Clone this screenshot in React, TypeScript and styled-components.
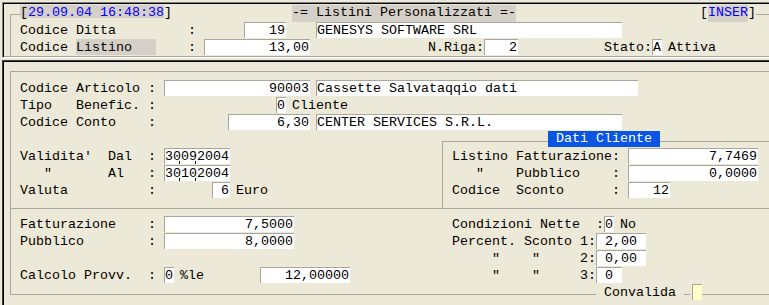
import React from 'react';
import styled, { createGlobalStyle } from 'styled-components';

const FACE = '#ece9d8';
const SHADE = '#d4d0c8';
const LINE = '#a9a79c';
const CHAR = 8;

const GlobalStyle = createGlobalStyle`
  * {
    box-sizing: border-box;
  }

  html,
  body {
    margin: 0;
    padding: 0;
    background: ${FACE};
  }

  body {
    font-family: 'Liberation Mono', 'Courier New', monospace;
    font-size: 13.333px;
    color: #000;
  }
`;

const ScreenTag = styled.div`
  width: 769px;
  height: 305px;
  overflow: hidden;
  background: ${FACE};
`;

const TopPanelTag = styled.div`
  margin: 2px 0 0 2px;
  padding: 2px 0 1px 1px;
  border-top: 1px solid #808080;
  border-left: 1px solid #808080;
  border-bottom: 1px solid #fff;
  box-shadow: inset 1px 1px 0 #000, inset 0 -1px 0 ${LINE};
`;

const BottomPanelTag = styled.div`
  margin: 2px 0 0 2px;
  padding: 1px 0 0 1px;
  height: 245px;
  border-top: 1px solid #404040;
  border-left: 1px solid #404040;
  box-shadow: inset 1px 1px 0 #000;
`;

// --- group box pieces ---

const LegendRowTag = styled.div`
  display: flex;
  height: 17px;
`;

const CornerTag = styled.div<{ $ml?: number; $w: number; $h: number }>`
  flex: none;
  align-self: flex-end;
  margin-left: ${({ $ml }) => $ml ?? 0}px;
  width: ${({ $w }) => $w}px;
  height: ${({ $h }) => $h}px;
  border-top: 1px solid ${LINE};
  border-left: 1px solid ${LINE};
`;

const StubTag = styled.div<{ $h: number }>`
  flex: 1;
  align-self: flex-end;
  height: ${({ $h }) => $h}px;
  border-top: 1px solid ${LINE};
`;

const GroupBodyTag = styled.div`
  margin-left: 6px;
  padding-left: 9px;
  border-left: 1px solid ${LINE};
`;

const FrameTag = styled.div`
  margin: 9px 0 0 6px;
  border-top: 1px solid ${LINE};
  border-left: 1px solid ${LINE};
`;

const SectionTag = styled.div<{ $pt: number }>`
  padding: ${({ $pt }) => $pt}px 0 0 9px;
`;

const SplitTag = styled.div`
  display: flex;
  border-bottom: 1px solid ${LINE};
`;

const LeftColTag = styled.div`
  flex: none;
  width: 431px;
  padding: 17px 0 9px 9px;
`;

const BoxColTag = styled.div`
  flex: 1;
  display: flex;
  flex-direction: column;
`;

const BoxBodyTag = styled.div`
  flex: 1;
  padding: 0 0 9px 9px;
  border-left: 1px solid ${LINE};
`;

const BoxLegendTag = styled.span`
  flex: none;
  align-self: flex-start;
  width: 112px;
  height: 16px;
  line-height: 16px;
  white-space: pre;
  color: #fff;
  background: #0a56e2;
`;

const FooterTag = styled.div`
  display: flex;
  height: 17px;
`;

const FootCornerTag = styled.div`
  flex: none;
  margin-left: 6px;
  width: 586px;
  height: 11px;
  border-left: 1px solid ${LINE};
  border-bottom: 1px solid ${LINE};
`;

const FootLabelTag = styled.span`
  flex: none;
  width: 88px;
  padding-top: 1px;
  line-height: 16px;
  white-space: pre;
`;

const FootLineTag = styled.div<{ $w?: number }>`
  height: 11px;
  border-bottom: 1px solid ${LINE};
  ${({ $w }) => ($w ? `flex: none; width: ${$w}px;` : 'flex: 1;')}
`;

const CheckTag = styled.div`
  flex: none;
  margin-left: 2px;
  width: 10px;
  height: 16px;
  background: #ffffc8;
  border-top: 1px solid ${LINE};
  border-left: 1px solid ${LINE};
`;

// --- character grid ---

const GridTag = styled.div<{ $cols: number }>`
  display: grid;
  grid-template-columns: repeat(${({ $cols }) => $cols}, ${CHAR}px);
  grid-template-rows: 17px;
`;

const TxtTag = styled.span<{ $c: number; $w?: number; $bg?: boolean }>`
  grid-row: 1;
  grid-column-start: ${({ $c }) => $c + 1};
  justify-self: start;
  ${({ $w }) => ($w ? `width: ${$w * CHAR}px;` : '')}
  height: 16px;
  padding-top: 1px;
  line-height: 16px;
  white-space: pre;
  background: ${({ $bg }) => ($bg ? SHADE : 'transparent')};
`;

const HeadTag = styled.span<{ $c: number; $w?: number; $h?: number; $bg?: boolean }>`
  grid-row: 1;
  grid-column-start: ${({ $c }) => $c + 1};
  justify-self: start;
  ${({ $w }) => ($w ? `width: ${$w * CHAR}px;` : '')}
  height: ${({ $h }) => $h ?? 13}px;
  line-height: 16px;
  white-space: pre;
  background: ${({ $bg }) => ($bg ? SHADE : 'transparent')};
`;

const BlueTag = styled.span`
  color: #0000ff;
`;

const FieldTag = styled.div<{ $c: number; $w: number; $right?: boolean; $date?: boolean }>`
  grid-row: 1;
  grid-column-start: ${({ $c }) => $c + 1};
  justify-self: start;
  width: ${({ $w }) => $w * CHAR + 2}px;
  height: 16px;
  padding-right: 1px;
  border-top: 1px solid ${LINE};
  border-left: 1px solid ${LINE};
  background: #fff;
  line-height: 16px;
  white-space: pre;
  text-align: ${({ $right }) => ($right ? 'right' : 'left')};

  ${({ $date }) =>
    $date &&
    `
      background:
        linear-gradient(#000, #000) 14px 100% / 1px 3px no-repeat,
        linear-gradient(#000, #000) 30px 100% / 1px 3px no-repeat,
        #fff;
    `}
`;

type FieldProps = { c: number; w: number; right?: boolean; date?: boolean; children?: React.ReactNode };

const Field = ({ c, w, right, date, children }: FieldProps) => (
  <FieldTag $c={c} $w={w} $right={right} $date={date}>
    {children}
  </FieldTag>
);

const T = ({ c, w, bg, children }: { c: number; w?: number; bg?: boolean; children: React.ReactNode }) => (
  <TxtTag $c={c} $w={w} $bg={bg}>
    {children}
  </TxtTag>
);

const Row = ({ cols = 92, children }: { cols?: number; children: React.ReactNode }) => (
  <GridTag $cols={cols}>{children}</GridTag>
);

const TopPanel = () => (
  <TopPanelTag>
    <LegendRowTag>
      <CornerTag $ml={6} $w={10} $h={8} />
      <GridTag $cols={92}>
        <HeadTag $c={0} $w={18} $bg>
          [<BlueTag>29.09.04 16:48:38</BlueTag>
        </HeadTag>
        <HeadTag $c={18}>]</HeadTag>
        <HeadTag $c={34} $w={28} $h={17} $bg>
          -= Listini Personalizzati =-
        </HeadTag>
        <HeadTag $c={85}>[</HeadTag>
        <HeadTag $c={86} $w={5} $h={17} $bg>
          <BlueTag>INSER</BlueTag>
        </HeadTag>
        <HeadTag $c={91}>]</HeadTag>
      </GridTag>
      <StubTag $h={8} />
    </LegendRowTag>
    <GroupBodyTag>
      <Row>
        <T c={0}>Codice Ditta</T>
        <T c={21}>:</T>
        <Field c={28} w={5} right>
          19
        </Field>
        <Field c={37} w={38}>
          GENESYS SOFTWARE SRL
        </Field>
      </Row>
      <Row>
        <T c={0}>Codice</T>
        <T c={7} w={10} bg>
          Listino
        </T>
        <T c={21}>:</T>
        <Field c={23} w={13} right>
          13,00
        </Field>
        <T c={51}>N.Riga:</T>
        <Field c={58} w={4} right>
          2
        </Field>
        <T c={73}>Stato:</T>
        <Field c={79} w={1}>
          A
        </Field>
        <T c={81}>Attiva</T>
      </Row>
    </GroupBodyTag>
  </TopPanelTag>
);

const ArticleSection = () => (
  <SectionTag $pt={8}>
    <Row>
      <T c={0}>Codice Articolo :</T>
      <Field c={18} w={18} right>
        90003
      </Field>
      <Field c={37} w={40}>
        Cassette Salvataqqio dati
      </Field>
    </Row>
    <Row>
      <T c={0}>Tipo   Benefic. :</T>
      <Field c={32} w={1}>
        0
      </Field>
      <T c={34}>Cliente</T>
    </Row>
    <Row>
      <T c={0}>Codice Conto    :</T>
      <Field c={26} w={10} right>
        6,30
      </Field>
      <Field c={37} w={38}>
        CENTER SERVICES S.R.L.
      </Field>
    </Row>
  </SectionTag>
);

const ValiditySection = () => (
  <SplitTag>
    <LeftColTag>
      <Row cols={52}>
        <T c={0}>Validita'</T>
        <T c={11}>Dal</T>
        <T c={16}>:</T>
        <Field c={18} w={8} date>
          30092004
        </Field>
      </Row>
      <Row cols={52}>
        <T c={3}>"</T>
        <T c={11}>Al</T>
        <T c={16}>:</T>
        <Field c={18} w={8} date>
          30102004
        </Field>
      </Row>
      <Row cols={52}>
        <T c={0}>Valuta</T>
        <T c={16}>:</T>
        <Field c={24} w={2} right>
          6
        </Field>
        <T c={27}>Euro</T>
      </Row>
    </LeftColTag>
    <BoxColTag>
      <LegendRowTag>
        <CornerTag $w={106} $h={7} />
        <BoxLegendTag> Dati Cliente </BoxLegendTag>
        <StubTag $h={7} />
      </LegendRowTag>
      <BoxBodyTag>
        <Row cols={40}>
          <T c={0}>Listino</T>
          <T c={8}>Fatturazione:</T>
          <Field c={22} w={16} right>
            7,7469
          </Field>
        </Row>
        <Row cols={40}>
          <T c={3}>"</T>
          <T c={8}>Pubblico</T>
          <T c={20}>:</T>
          <Field c={22} w={16} right>
            0,0000
          </Field>
        </Row>
        <Row cols={40}>
          <T c={0}>Codice</T>
          <T c={8}>Sconto</T>
          <T c={20}>:</T>
          <Field c={22} w={5} right>
            12
          </Field>
        </Row>
      </BoxBodyTag>
    </BoxColTag>
  </SplitTag>
);

const PriceSection = () => (
  <SectionTag $pt={7}>
    <Row>
      <T c={0}>Fatturazione</T>
      <T c={16}>:</T>
      <Field c={18} w={16} right>
        7,5000
      </Field>
      <T c={54}>Condizioni Nette</T>
      <T c={72}>:</T>
      <Field c={73} w={1}>
        0
      </Field>
      <T c={75}>No</T>
    </Row>
    <Row>
      <T c={0}>Pubblico</T>
      <T c={16}>:</T>
      <Field c={18} w={16} right>
        8,0000
      </Field>
      <T c={54}>Percent. Sconto 1:</T>
      <Field c={72} w={6}>
        {' 2,00'}
      </Field>
    </Row>
    <Row>
      <T c={59}>"</T>
      <T c={64}>"</T>
      <T c={70}>2:</T>
      <Field c={72} w={6}>
        {' 0,00'}
      </Field>
    </Row>
    <Row>
      <T c={0}>Calcolo Provv.</T>
      <T c={16}>:</T>
      <Field c={18} w={1}>
        0
      </Field>
      <T c={20}>%le</T>
      <Field c={30} w={11} right>
        12,00000
      </Field>
      <T c={59}>"</T>
      <T c={64}>"</T>
      <T c={70}>3:</T>
      <Field c={72} w={3}>
        {' 0'}
      </Field>
    </Row>
  </SectionTag>
);

const BottomPanel = () => (
  <BottomPanelTag>
    <FrameTag>
      <ArticleSection />
      <ValiditySection />
      <PriceSection />
    </FrameTag>
    <FooterTag>
      <FootCornerTag />
      <FootLabelTag> Convalida </FootLabelTag>
      <FootLineTag $w={6} />
      <CheckTag />
      <FootLineTag />
    </FooterTag>
  </BottomPanelTag>
);

export default function App() {
  return (
    <>
      <GlobalStyle />
      <ScreenTag>
        <TopPanel />
        <BottomPanel />
      </ScreenTag>
    </>
  );
}
